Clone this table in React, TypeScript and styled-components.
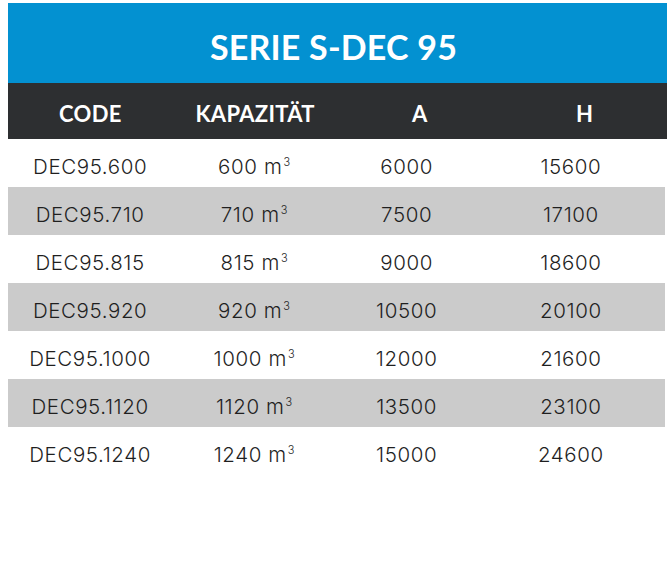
import React from "react";
import styled, { createGlobalStyle } from "styled-components";

const Global = createGlobalStyle`
  html, body { margin: 0; padding: 0; background: #ffffff; }
  body { font-family: "Lato", "Liberation Sans", sans-serif; }
`;

const Wrap = styled.div`
  padding: 3px 2px 0 8px;
`;

const Title = styled.div`
  height: 80px;
  margin-right: -2px;
  background: #0391d1;
  color: #ffffff;
  display: flex;
  align-items: center;
  justify-content: center;
  font-weight: 700;
  font-size: 34px;
  letter-spacing: 0.2px;
  padding: 6px 8px 0 0;
  box-sizing: border-box;
`;

const Grid = styled.div`
  display: grid;
  grid-template-columns: repeat(4, 1fr);
`;

const HeadRow = styled(Grid)`
  height: 56px;
  margin-right: -2px;
  background: #2d2f31;
  align-items: center;
`;

const HeadCell = styled.div`
  color: #ffffff;
  font-weight: 700;
  font-size: 22px;
  text-align: center;
  padding-top: 5px;
  letter-spacing: 0.3px;
`;

const Row = styled(Grid)<{ $shade: boolean }>`
  height: 48px;
  align-items: center;
  background: ${(p) => (p.$shade ? "#cbcbcb" : "#ffffff")};
`;

const Cell = styled.div<{ $shift: number }>`
  font-family: "Inter", "Liberation Sans", sans-serif;
  color: #1f1f1f;
  font-size: 20.5px;
  font-weight: 300;
  text-align: center;
  padding-right: ${(p) => p.$shift}px;
  padding-top: 7px;
  letter-spacing: 0.6px;
`;

const Sup = styled.sup`
  font-size: 11px;
  vertical-align: 8px;
  line-height: 0;
  margin-left: 1px;
`;

const rows = [
  ["DEC95.600", "600", "6000", "15600"],
  ["DEC95.710", "710", "7500", "17100"],
  ["DEC95.815", "815", "9000", "18600"],
  ["DEC95.920", "920", "10500", "20100"],
  ["DEC95.1000", "1000", "12000", "21600"],
  ["DEC95.1120", "1120", "13500", "23100"],
  ["DEC95.1240", "1240", "15000", "24600"],
];

export default function App() {
  return (
    <Wrap>
      <Global />
      <Title>SERIE S-DEC 95</Title>
      <HeadRow>
        <HeadCell>CODE</HeadCell>
        <HeadCell>KAPAZITÄT</HeadCell>
        <HeadCell>A</HeadCell>
        <HeadCell>H</HeadCell>
      </HeadRow>
      {rows.map((r, i) => (
        <Row key={r[0]} $shade={i % 2 === 1}>
          <Cell $shift={0}>{r[0]}</Cell>
          <Cell $shift={0}>
            {r[1]} m<Sup>3</Sup>
          </Cell>
          <Cell $shift={24}>{r[2]}</Cell>
          <Cell $shift={24}>{r[3]}</Cell>
        </Row>
      ))}
    </Wrap>
  );
}
